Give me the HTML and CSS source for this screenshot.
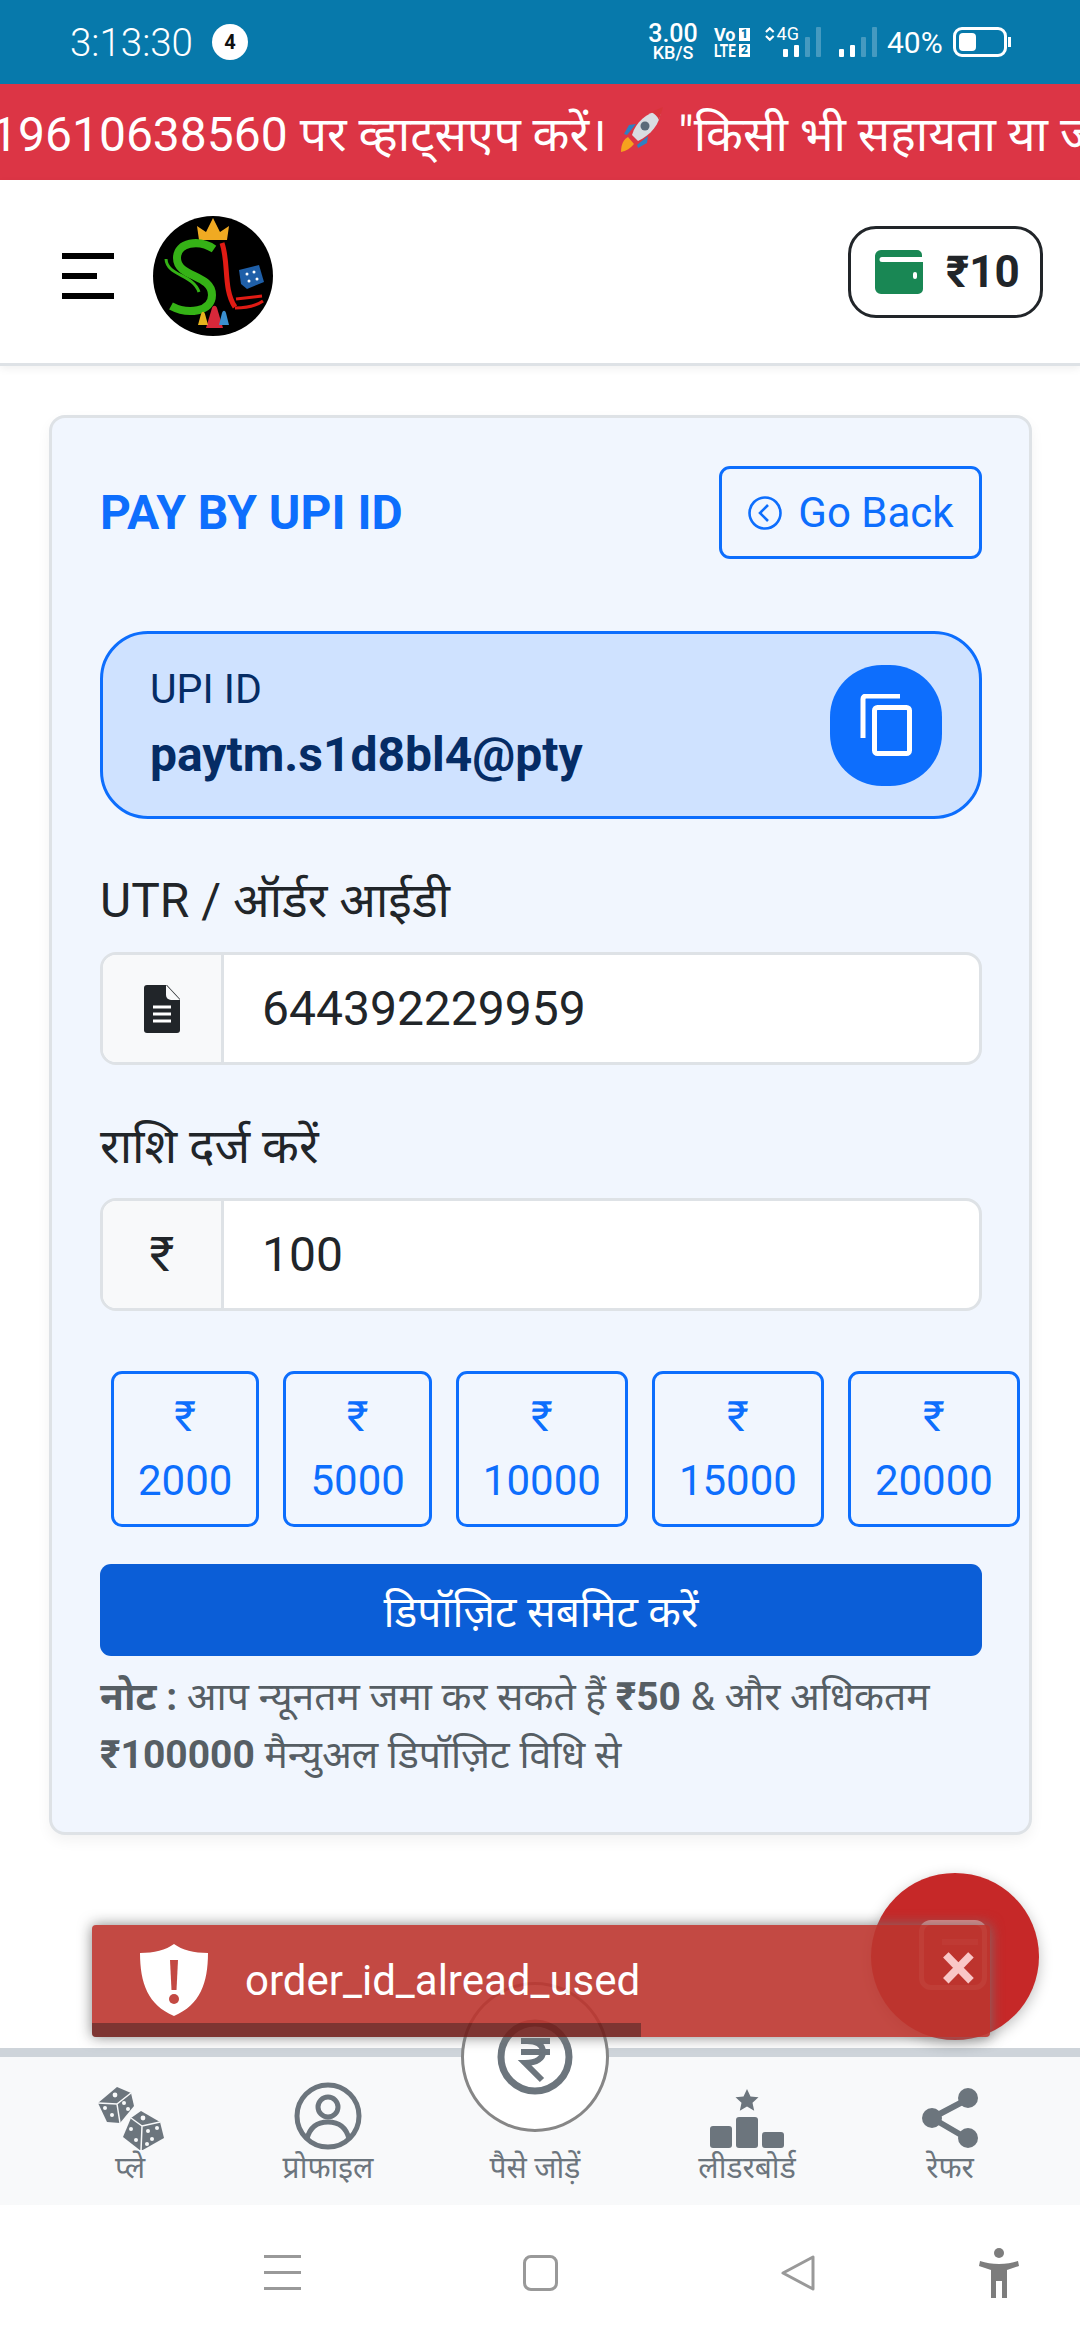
FILE: index.html
```html
<!DOCTYPE html>
<html lang="hi">
<head>
  <meta charset="UTF-8" />
  <title>Pay by UPI ID</title>
  <link rel="stylesheet" href="styles.css">
</head>
<body>
  <div class="status-bar">
    <div class="status-left">
      <span class="clock">3:13:30</span>
      <span class="count-badge">4</span>
    </div>
    <div class="status-right">
      <div class="speed"><span class="speed-num">3.00</span><span class="speed-unit">KB/S</span></div>
      <div class="volte">
        <div class="volte-row"><span>Vo</span><b>1</b></div>
        <div class="volte-row"><span class="lte">LTE</span><b>2</b></div>
      </div>
      <div class="net">
        <svg width="10" height="14" viewBox="0 0 10 14"><path d="M1 5 5 1l4 4M1 9l4 4 4-4" fill="none" stroke="#fff" stroke-width="2.200"/></svg>
        <span class="net-label">4G</span>
      </div>
      <div class="bars bars-first">
        <i class="bar b1"></i><i class="bar b2"></i><i class="bar b3 dim"></i><i class="bar b4 dim"></i>
      </div>
      <div class="bars bars-second">
        <i class="bar b1"></i><i class="bar b2"></i><i class="bar b3 dim"></i><i class="bar b4 dim"></i>
      </div>
      <span class="battery-pct">40%</span>
      <div class="battery"><i class="battery-fill"></i></div>
    </div>
  </div>

  <div class="ticker">
    <span class="ticker-start">19610638560 पर व्हाट्सएप करें।</span>
    <svg class="rocket" width="48" height="48" viewBox="0 0 48 48">
      <path d="M3 46c0-8 3-13 7-15l6 7c-3 4-8 7-13 8z" fill="#f6a21e"/>
      <path d="M9 29l-3-1 5-9 7-1zM19 39l1 3 9-5 1-7z" fill="#2f7fc1"/>
      <path d="M14 29C18 16 28 7 43 4c-1 14-10 25-23 31z" fill="#d9dde2"/>
      <path d="M33 6l12-5-4 13c-2-4-4-6-8-8z" fill="#d8343b"/>
      <circle cx="27" cy="20" r="4.500" fill="#5b6b7a"/>
    </svg>
    <span class="ticker-rest">"किसी भी सहायता या जानकारी के लिए</span>
  </div>

  <header class="topbar">
    <div class="topbar-left">
      <div class="menu-btn"><i class="line"></i><i class="line short"></i><i class="line"></i></div>
      <svg class="logo" width="120" height="120" viewBox="0 0 120 120">
        <circle cx="60" cy="60" r="60" fill="#000"/>
        <path d="M46 24l-2-14 9 6 7-14 7 14 9-6-2 14z" fill="#f0aa22"/>
        <path d="M61 33C46 23 24 26 24 42c0 20 35 16 35 37 0 17-24 20-41 11" fill="none" stroke="#35b216" stroke-width="8"/>
        <path d="M13 43c1 17 27 15 33 33" fill="none" stroke="#35b216" stroke-width="3"/>
        <path d="M69 27c7 20 1 46 13 64" fill="none" stroke="#e01b14" stroke-width="5"/>
        <path d="M83 83l26-3M82 92c11 0 21-2 28-7" fill="none" stroke="#e01b14" stroke-width="3"/>
        <path d="M86 54l20-5 5 17-17 7-6-5z" fill="#1f5fa8"/>
        <g fill="#fff"><circle cx="94" cy="58" r="1.500"/><circle cx="101" cy="56" r="1.500"/><circle cx="96" cy="65" r="1.500"/><circle cx="104" cy="63" r="1.500"/></g>
        <path d="M53 112l6-20c1-3 4-3 5 0l6 20z" fill="#d8283a"/>
        <path d="M45 109l3-11c1-3 3-3 4 0l3 11z" fill="#e8b21e"/>
        <path d="M66 109l3-12c1-3 3-3 4 0l3 12z" fill="#3a8fd0"/>
      </svg>
    </div>
    <div class="wallet-btn">
      <svg width="48" height="44" viewBox="0 0 48 44"><path d="M6 0h36a5 5 0 0 1 5 5v2H7a2 2 0 0 0 0 5h41v27a5 5 0 0 1-5 5H6a6 6 0 0 1-6-6V6a6 6 0 0 1 6-6z" fill="#198754"/><rect x="38" y="22" width="4" height="7" rx="2" fill="#fff"/></svg>
      <span class="wallet-amount">₹10</span>
    </div>
  </header>

  <main class="content">
    <section class="pay-card">
      <div class="pay-head">
        <h1 class="pay-title">PAY BY UPI ID</h1>
        <div class="back-btn">
          <svg width="36" height="36" viewBox="0 0 36 36"><circle cx="18" cy="18" r="15.500" fill="none" stroke="#0d6efd" stroke-width="2.600"/><path d="M21 10l-8 8 8 8" fill="none" stroke="#0d6efd" stroke-width="2.600"/></svg>
          <span>Go Back</span>
        </div>
      </div>

      <div class="upi-box">
        <div>
          <div class="upi-label">UPI ID</div>
          <div class="upi-value">paytm.s1d8bl4@pty</div>
        </div>
        <div class="copy-btn">
          <svg width="52" height="62" viewBox="0 0 52 62"><path d="M3 44V5a3 3 0 0 1 3-3h34" fill="none" stroke="#fff" stroke-width="5"/><rect x="14.500" y="13.500" width="35" height="46" rx="3" fill="none" stroke="#fff" stroke-width="5"/></svg>
        </div>
      </div>

      <label class="field-label">UTR / ऑर्डर आईडी</label>
      <div class="input-group">
        <div class="input-addon">
          <svg width="36" height="48" viewBox="0 0 36 48"><path d="M3 0h20l13 14v31a3 3 0 0 1-3 3H3a3 3 0 0 1-3-3V3a3 3 0 0 1 3-3z" fill="#212529"/><path d="M22 0v10a5 5 0 0 0 5 5h9z" fill="#f8f9fa"/><path d="M9 22h18M9 29h18M9 36h18" stroke="#fff" stroke-width="3"/></svg>
        </div>
        <div class="input-value">644392229959</div>
      </div>

      <label class="field-label">राशि दर्ज करें</label>
      <div class="input-group">
        <div class="input-addon rupee">₹</div>
        <div class="input-value">100</div>
      </div>

      <div class="amounts">
        <div class="amount-btn"><span>₹</span><span>2000</span></div>
        <div class="amount-btn"><span>₹</span><span>5000</span></div>
        <div class="amount-btn"><span>₹</span><span>10000</span></div>
        <div class="amount-btn"><span>₹</span><span>15000</span></div>
        <div class="amount-btn"><span>₹</span><span>20000</span></div>
      </div>

      <button class="submit-btn">डिपॉज़िट सबमिट करें</button>
      <p class="note"><b>नोट :</b> आप न्यूनतम जमा कर सकते हैं <b>₹50</b> &amp; और अधिकतम <b>₹100000</b> मैन्युअल डिपॉज़िट विधि से</p>
    </section>
  </main>

  <nav class="bottom-nav">
    <div class="nav-item">
      <svg width="70" height="66" viewBox="0 0 70 66">
        <path d="M22 3 36 9l3 13-14 17-13-1L3 19z" fill="#6c757d"/>
        <path d="M22 20 36 9M22 20 3 19M22 20l3 19" stroke="#f8f9fa" stroke-width="1.500" fill="none"/>
        <path d="M46 27l19 11 4 16-23 13-18-14 8-19z" fill="#6c757d"/>
        <path d="M47 42 65 38M47 42 36 34M47 42l-1 25" stroke="#f8f9fa" stroke-width="1.500" fill="none"/>
        <g fill="#f8f9fa"><circle cx="20" cy="11" r="2.400"/><circle cx="10" cy="24" r="2"/><circle cx="17" cy="31" r="2"/><circle cx="29" cy="19" r="2"/><circle cx="33" cy="25" r="2"/><circle cx="48" cy="34" r="2.400"/><circle cx="36" cy="45" r="2"/><circle cx="41" cy="56" r="2"/><circle cx="53" cy="47" r="2"/><circle cx="62" cy="44" r="2"/><circle cx="57" cy="55" r="2"/><circle cx="52" cy="60" r="2"/></g>
      </svg>
      <span class="nav-label">प्ले</span>
    </div>
    <div class="nav-item">
      <svg width="68" height="68" viewBox="0 0 68 68"><circle cx="34" cy="34" r="31" fill="none" stroke="#6c757d" stroke-width="5"/><circle cx="34" cy="25" r="10" fill="none" stroke="#6c757d" stroke-width="5"/><path d="M13 57c3-13 11-17 21-17s18 4 21 17" fill="none" stroke="#6c757d" stroke-width="5"/></svg>
      <span class="nav-label">प्रोफाइल</span>
    </div>
    <div class="nav-item nav-item-add">
      <span class="nav-label">पैसे जोड़ें</span>
      <div class="add-circle">
        <svg width="76" height="76" viewBox="0 0 76 76"><circle cx="38" cy="38" r="34" fill="none" stroke="#6c757d" stroke-width="7"/><path d="M24 22h29M24 33h29M30 22c12 0 16 5 16 11s-6 11-18 11l17 17" fill="none" stroke="#6c757d" stroke-width="6"/></svg>
      </div>
    </div>
    <div class="nav-item">
      <svg width="74" height="66" viewBox="0 -4 74 66"><path d="M37 1l3.500 7.500 8 .8-6 5.500 1.700 8-7.200-4.200-7.200 4.200 1.700-8-6-5.500 8-.8z" fill="#6c757d"/><rect y="38" width="22" height="22" rx="3" fill="#6c757d"/><rect x="26" y="29" width="22" height="31" rx="3" fill="#6c757d"/><rect x="52" y="44" width="22" height="16" rx="3" fill="#6c757d"/></svg>
      <span class="nav-label">लीडरबोर्ड</span>
    </div>
    <div class="nav-item">
      <svg width="60" height="66" viewBox="0 -2 60 66"><path d="M48 13 12 32l36 21" fill="none" stroke="#6c757d" stroke-width="6"/><circle cx="48" cy="12" r="10" fill="#6c757d"/><circle cx="12" cy="32" r="10" fill="#6c757d"/><circle cx="48" cy="52" r="10" fill="#6c757d"/></svg>
      <span class="nav-label">रेफर</span>
    </div>
  </nav>

  <div class="sys-nav">
    <div class="sys-menu"><i></i><i></i><i></i></div>
    <div class="sys-home"></div>
    <svg class="sys-back" width="38" height="38" viewBox="0 0 38 38"><path d="M34 3v32L4 19z" fill="none" stroke="#999" stroke-width="3" stroke-linejoin="round"/></svg>
    <svg class="sys-person" width="40" height="50" viewBox="0 0 40 50"><circle cx="20" cy="5" r="5" fill="#7d7d7d"/><path d="M1 13c6 2 12 3 19 3s13-1 19-3l1 5-12 4v28h-5V33h-6v17h-5V22L0 18z" fill="#7d7d7d"/></svg>
  </div>

  <div class="float-btn">
    <div class="float-icon"><i></i></div>
  </div>

  <div class="toast">
    <svg width="68" height="72" viewBox="0 0 68 72"><path d="M34 0c8 6 20 9 34 9 0 30-8 52-34 63C8 61 0 39 0 9c14 0 26-3 34-9z" fill="#fff"/><path d="M30 16h8l-1.500 30h-5z" fill="#bd362f"/><circle cx="34" cy="55" r="5" fill="#bd362f"/></svg>
    <span class="toast-msg">order_id_alread_used</span>
    <span class="toast-close">×</span>
    <div class="toast-progress"></div>
  </div>
</body>
</html>
```
FILE: styles.css
```css
/* --- Global --- */
* { box-sizing: border-box; margin: 0; padding: 0; }
html, body { width: 1080px; height: 2340px; overflow: hidden; }
body {
  font-family: Roboto, "Noto Sans", sans-serif;
  background: #fff;
  color: #212529;
  display: flex;
  flex-direction: column;
  position: relative;
}

/* --- Status bar --- */
.status-bar {
  height: 84px;
  background: #0779ab;
  color: #fff;
  display: flex;
  justify-content: space-between;
  align-items: center;
  padding: 0 73px 0 70px;
  flex-shrink: 0;
}
.status-left { display: flex; align-items: center; gap: 19px; }
.clock { font-size: 38.500px; font-weight: 300; }
.count-badge {
  width: 36px;
  height: 36px;
  border-radius: 50%;
  background: #fff;
  color: #111;
  font-size: 20px;
  font-weight: 700;
  display: flex;
  align-items: center;
  justify-content: center;
}
.status-right { display: flex; align-items: center; }
.speed { display: flex; flex-direction: column; align-items: center; width: 50px; margin-right: 16px; }
.speed-num { font-size: 25px; line-height: 22px; font-weight: 500; }
.speed-unit { font-size: 18px; line-height: 16px; font-weight: 500; }
.volte { display: flex; flex-direction: column; gap: 3px; width: 36px; margin-right: 15px; }
.volte-row {
  display: flex;
  justify-content: space-between;
  font-size: 18px;
  line-height: 13px;
  font-weight: 700;
}
.lte { display: inline-block; width: 22px; transform: scaleX(0.75); transform-origin: left; }
.volte-row b {
  background: #fff;
  color: #0779ab;
  width: 11px;
  font-size: 12px;
  text-align: center;
}
.net { display: flex; align-items: center; height: 30px; margin-top: -16px; gap: 2px; width: 34px; }
.net-label { font-size: 18px; line-height: 20px; }
.bars { display: flex; align-items: flex-end; gap: 6px; height: 30px; }
.bars-first { margin-left: -16px; margin-right: 18px; }
.bars-second { margin-right: 10px; }
.bar { display: block; width: 5px; background: #fff; border-radius: 1px; }
.bar.dim { background: rgba(255,255,255,0.25); }
.b1 { height: 8px; }
.b2 { height: 12px; }
.b3 { height: 20px; }
.b4 { height: 30px; }
.battery-pct { font-size: 30px; width: 56px; margin-right: 10px; white-space: nowrap; }
.battery {
  width: 54px;
  height: 30px;
  border: 3px solid #fff;
  border-radius: 9px;
  padding: 3px;
  position: relative;
}
.battery::after {
  content: "";
  position: absolute;
  right: -7px;
  top: 7px;
  width: 3px;
  height: 10px;
  background: #fff;
}
.battery-fill { display: block; width: 17px; height: 100%; background: #fff; border-radius: 4px; }

/* --- Ticker --- */
.ticker {
  height: 96px;
  background: #dc3545;
  color: #fff;
  font-size: 48px;
  display: flex;
  align-items: center;
  white-space: nowrap;
  overflow: hidden;
  flex-shrink: 0;
}
.ticker-start { flex-shrink: 0; margin-left: -9px; }
.rocket { flex-shrink: 0; margin: -4px 12px 0 11px; }
.ticker-rest { flex-shrink: 0; }

/* --- Top bar --- */
.topbar {
  height: 186px;
  background: #fff;
  border-bottom: 3px solid #dee2e6;
  box-shadow: 0 3px 8px rgba(0,0,0,0.06);
  display: flex;
  justify-content: space-between;
  align-items: center;
  padding: 0 37px 0 62px;
  flex-shrink: 0;
}
.topbar-left { display: flex; align-items: center; gap: 39px; margin-top: 9px; }
.menu-btn { display: flex; flex-direction: column; gap: 14px; width: 52px; }
.line { display: block; height: 6px; background: #000; }
.line.short { width: 35px; }
.wallet-btn {
  width: 195px;
  height: 92px;
  border: 3px solid #212529;
  border-radius: 28px;
  display: flex;
  align-items: center;
  gap: 23px;
  padding-left: 24px;
}
.wallet-amount { font-size: 44px; font-weight: 700; }

/* --- Card --- */
.content { flex: 1; padding: 49px 48px 0 49px; }
.pay-card {
  background: #f1f6fe;
  border: 3px solid #dee2e6;
  border-radius: 16px;
  box-shadow: 0 6px 14px rgba(0,0,0,0.05);
  padding: 48px 47px 17px 48px;
  height: 1420px;
}
.pay-head { display: flex; justify-content: space-between; align-items: center; height: 93px; }
.pay-title { font-size: 48px; font-weight: 700; color: #0d6efd; }
.back-btn {
  width: 263px;
  height: 93px;
  border: 3px solid #0d6efd;
  border-radius: 11px;
  color: #0d6efd;
  font-size: 42px;
  display: flex;
  align-items: center;
  justify-content: center;
  gap: 15px;
}

.upi-box {
  margin-top: 72px;
  height: 188px;
  background: #cfe2ff;
  border: 3px solid #0d6efd;
  border-radius: 48px;
  display: flex;
  justify-content: space-between;
  align-items: center;
  padding: 0 37px 0 47px;
  color: #052c65;
}
.upi-label { font-size: 41px; line-height: 60px; }
.upi-value { font-size: 48px; font-weight: 700; line-height: 72px; }
.copy-btn {
  width: 112px;
  height: 121px;
  background: #0d6efd;
  border-radius: 52px;
  display: flex;
  align-items: center;
  justify-content: center;
}

.field-label {
  display: block;
  margin-top: 49px;
  margin-bottom: 18px;
  font-size: 48px;
  line-height: 66px;
}
.input-group {
  height: 113px;
  border: 3px solid #dee2e6;
  border-radius: 16px;
  background: #fff;
  display: flex;
  overflow: hidden;
}
.input-addon {
  width: 121px;
  background: #f8f9fa;
  border-right: 3px solid #dee2e6;
  display: flex;
  align-items: center;
  justify-content: center;
  flex-shrink: 0;
}
.input-addon.rupee { font-size: 48px; }
.input-value {
  font-size: 48px;
  padding-left: 38px;
  display: flex;
  align-items: center;
}

.amounts { display: flex; gap: 24px; margin: 60px 0 0 11px; width: 910px; }
.amount-btn {
  height: 156px;
  padding: 0 24px;
  border: 3px solid #0d6efd;
  border-radius: 11px;
  color: #0d6efd;
  font-size: 42px;
  display: flex;
  flex-direction: column;
  align-items: center;
  justify-content: center;
  line-height: 64px;
}

.submit-btn {
  display: block;
  width: 100%;
  height: 92px;
  margin-top: 37px;
  background: #0b5ed7;
  color: #fff;
  border: none;
  border-radius: 11px;
  font-family: inherit;
  font-size: 42.500px;
}
.note {
  margin-top: 12px;
  font-size: 39px;
  line-height: 58px;
  color: #565e64;
}

/* --- Bottom nav --- */
.bottom-nav {
  height: 157px;
  background: #f8f9fa;
  border-top: 9px solid #ced4da;
  display: grid;
  grid-template-columns: 196px 200px 214px 210px 196px;
  padding: 0 32px;
  position: relative;
  flex-shrink: 0;
}
.nav-item {
  display: flex;
  flex-direction: column;
  align-items: center;
  justify-content: flex-end;
  padding-bottom: 22px;
  color: #6c757d;
}
.nav-item svg { margin-bottom: 3px; }
.nav-label { font-size: 30px; line-height: 30px; height: 30px; white-space: nowrap; }
.add-circle {
  position: absolute;
  left: 461px;
  top: -75px;
  width: 148px;
  height: 150px;
  border-radius: 50%;
  background: #fff;
  border: 3px solid #868686;
  display: flex;
  align-items: center;
  justify-content: center;
}
.add-circle svg { margin-bottom: 0; }

/* --- System nav --- */
.sys-nav {
  height: 135px;
  background: #fff;
  display: flex;
  align-items: center;
  padding-left: 264px;
  flex-shrink: 0;
}
.sys-menu { width: 37px; display: flex; flex-direction: column; gap: 13px; }
.sys-menu i { display: block; height: 3px; background: #999; }
.sys-home { width: 35px; height: 36px; margin-left: 222px; border: 3px solid #999; border-radius: 8px; }
.sys-back { margin-left: 221px; }
.sys-person { margin-left: 162px; }

/* --- Overlays --- */
.float-btn {
  position: absolute;
  left: 871px;
  top: 1873px;
  width: 168px;
  height: 167px;
  border-radius: 50%;
  background: #c62828;
  box-shadow: 0 4px 14px rgba(0,0,0,0.25);
}
.float-icon {
  position: absolute;
  left: 48px;
  top: 47px;
  width: 68px;
  height: 70px;
  border: 5px solid rgba(255,255,255,0.45);
  border-radius: 12px;
}
.float-icon i {
  display: block;
  width: 36px;
  height: 6px;
  margin: 14px 0 0 18px;
  background: rgba(255,255,255,0.3);
}
.toast {
  position: absolute;
  left: 92px;
  top: 1925px;
  width: 898px;
  height: 112px;
  background: #bd362f;
  opacity: 0.9;
  border-radius: 4px;
  box-shadow: 0 0 14px #777;
  color: #fff;
  display: flex;
  align-items: center;
  padding: 0 0 2px 48px;
  overflow: hidden;
}
.toast-msg { font-size: 42px; margin-left: 37px; }
.toast-close {
  position: absolute;
  right: 14px;
  top: 10px;
  font-size: 66px;
  font-weight: 700;
  line-height: 66px;
  color: #ffd9d9;
}
.toast-progress {
  position: absolute;
  left: 0;
  bottom: 0;
  width: 549px;
  height: 14px;
  background: rgba(0,0,0,0.4);
}
```
